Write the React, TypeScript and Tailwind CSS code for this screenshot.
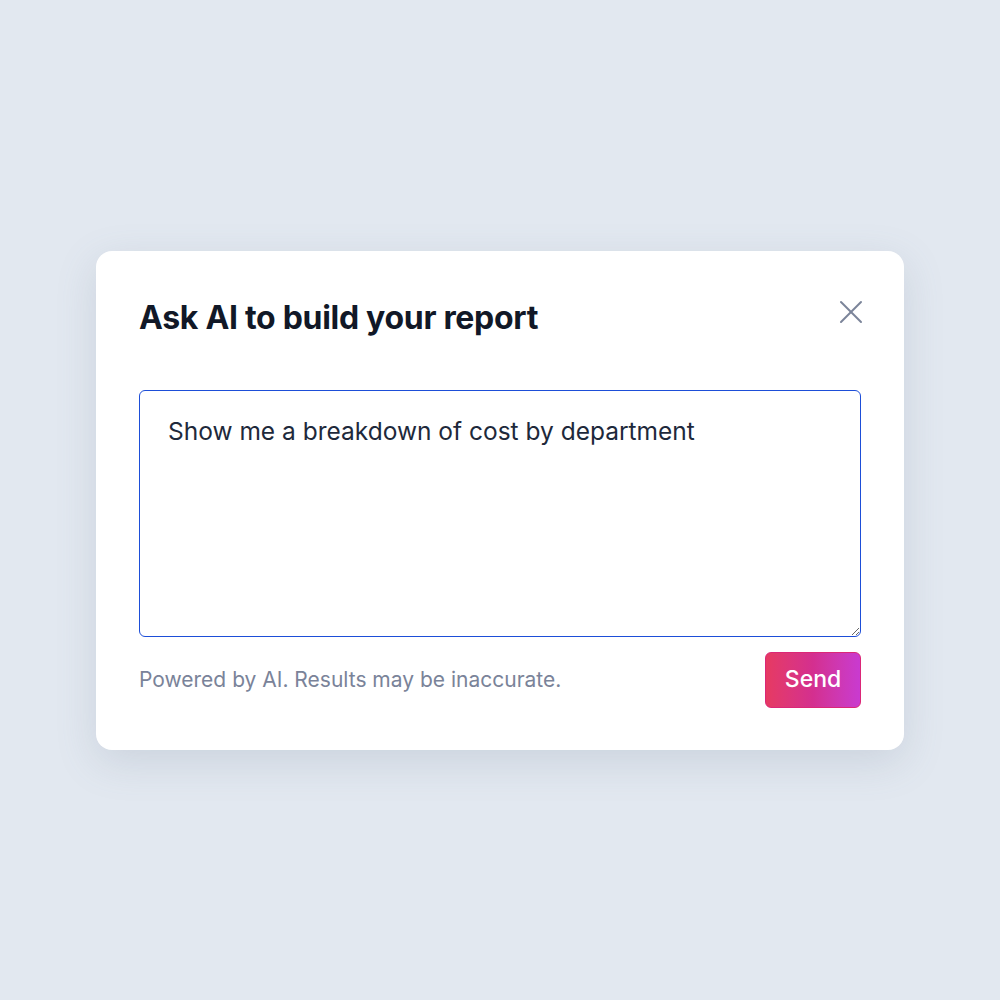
import React from 'react';

const CloseIcon: React.FC = () => (
  <svg width="24" height="24" viewBox="0 0 24 24" fill="none" stroke="currentColor" strokeWidth="2" strokeLinecap="round">
    <path d="M2 2 22 22" />
    <path d="M22 2 2 22" />
  </svg>
);

export default function App() {
  return (
    <div
      className="min-h-screen w-full bg-[#e2e8f0] flex items-center justify-center"
      style={{ fontFamily: 'Inter, "Noto Sans", sans-serif' }}
    >
      <div className="w-[808px] bg-white rounded-[16px] shadow-[0_12px_40px_rgba(100,116,139,0.18)] px-[43px] pt-[48px] pb-[42px]">
        <div className="flex items-start justify-between">
          <h2 className="text-[32px] leading-[38px] font-bold text-[#111827] tracking-[-0.3px]">
            Ask AI to build your report
          </h2>
          <button className="text-[#7b8499] mt-[1px] mr-[-2px]" aria-label="Close">
            <CloseIcon />
          </button>
        </div>

        <textarea
          className="mt-[53px] block w-full h-[247px] rounded-[6px] border border-[#1d4ed8] px-[28px] py-[24px] text-[24.5px] leading-[32px] text-[#1e293b] outline-none"
          defaultValue="Show me a breakdown of cost by department"
          autoFocus
          onFocus={(e) => {
            const el = e.currentTarget;
            el.setSelectionRange(el.value.length, el.value.length);
          }}
        />

        <div className="mt-[15px] flex items-center justify-between">
          <p className="text-[21px] text-[#7a8399]">Powered by AI. Results may be inaccurate.</p>
          <button className="w-[96px] h-[56px] rounded-[6px] border border-[#db2777] bg-gradient-to-r from-[#e63a62] via-[#d42f8f] to-[#c93ad0] text-white text-[23px] font-medium">
            Send
          </button>
        </div>
      </div>
    </div>
  );
}
